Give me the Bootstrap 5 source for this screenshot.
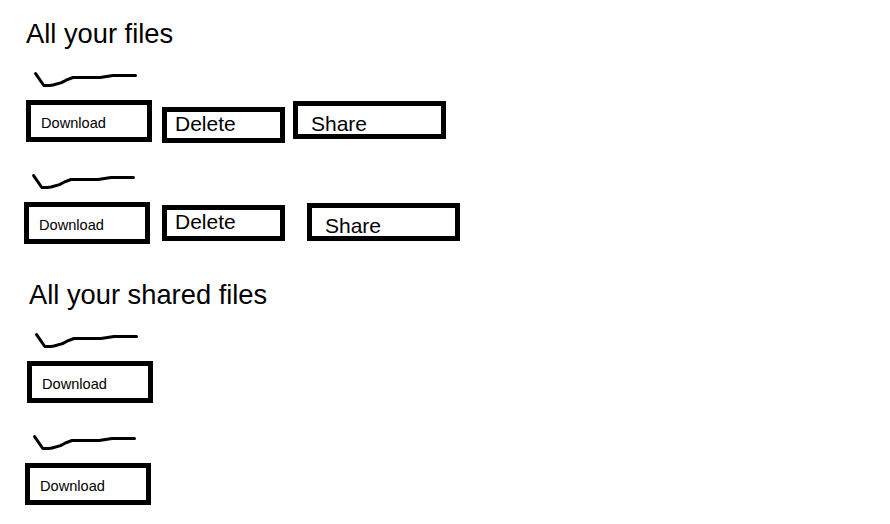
<!DOCTYPE html>
<html lang="en">
<head>
<meta charset="utf-8">
<meta name="viewport" content="width=device-width, initial-scale=1">
<title>Files</title>
<link href="https://cdn.jsdelivr.net/npm/bootstrap@5.3.0/dist/css/bootstrap.min.css" rel="stylesheet">
<style>
  body { font-family: "Liberation Sans", Arial, sans-serif; color: #000; background: #fff; }
  .page { padding: 16px 0 0 24px; }
  .section-title { font-size: 27.3px; line-height: 36px; font-weight: 400; margin: 0 0 14px; }
  .shared { margin-top: 33px; }
  .file + .file { margin-top: 26px; }
  .file-name { display: block; width: 126px; height: 34px; }
  .actions { height: 42px; }
  .box-btn { border: 5px solid #000; border-radius: 0; background: #fff; color: #000; text-align: left; line-height: 24px; white-space: nowrap; padding: 0; }
  .box-download { width: 126px; height: 42px; font-size: 14.6px; padding: 6px 0 0 10px; }
  .box-delete { width: 123px; height: 36px; font-size: 21px; padding-left: 8px; }
  .box-share { width: 153px; height: 38px; font-size: 21px; padding: 6px 0 0 13px; }
  .inset-1 { margin-left: 1px; }
  .inset-2 { margin-left: 2px; }
  .inset-3 { margin-left: 3px; }
  .inset-5 { margin-left: 5px; }
  .first .box-delete { margin: 7px 8px 0 10px; }
  .first .box-share { margin-top: 1px; }
  .second .box-delete { margin: 3px 22px 0 12px; }
  .second .box-share { margin-top: 1px; }
</style>
<script src="https://cdn.jsdelivr.net/npm/bootstrap@5.3.0/dist/js/bootstrap.bundle.min.js"></script>
</head>
<body>
<svg class="d-none" aria-hidden="true">
  <symbol id="scribble" viewBox="0 0 126 34">
    <path d="M9.6 7.6 L17.8 19.5 H23.5 L27 19 L35.5 16.6 L40 14.2 L47 11.5 H74 L87 9.5 H109.5" fill="none" stroke="#000" stroke-width="3" stroke-linecap="round" stroke-linejoin="round"/>
  </symbol>
</svg>
<main class="page">
  <section>
    <h1 class="section-title inset-2">All your files</h1>
    <div class="file first inset-2">
      <svg class="file-name" role="img" aria-label="File"><use href="#scribble"/></svg>
      <div class="actions d-flex align-items-start">
        <button type="button" class="btn box-btn box-download d-flex align-items-start">Download</button>
        <button type="button" class="btn box-btn box-delete d-flex align-items-start">Delete</button>
        <button type="button" class="btn box-btn box-share d-flex align-items-start">Share</button>
      </div>
    </div>
    <div class="file second">
      <svg class="file-name" role="img" aria-label="File"><use href="#scribble"/></svg>
      <div class="actions d-flex align-items-start">
        <button type="button" class="btn box-btn box-download d-flex align-items-start">Download</button>
        <button type="button" class="btn box-btn box-delete d-flex align-items-start">Delete</button>
        <button type="button" class="btn box-btn box-share d-flex align-items-start">Share</button>
      </div>
    </div>
  </section>
  <section class="shared">
    <h2 class="section-title inset-5">All your shared files</h2>
    <div class="file inset-3">
      <svg class="file-name" role="img" aria-label="File"><use href="#scribble"/></svg>
      <div class="actions d-flex align-items-start">
        <button type="button" class="btn box-btn box-download d-flex align-items-start">Download</button>
      </div>
    </div>
    <div class="file inset-1">
      <svg class="file-name" role="img" aria-label="File"><use href="#scribble"/></svg>
      <div class="actions d-flex align-items-start">
        <button type="button" class="btn box-btn box-download d-flex align-items-start">Download</button>
      </div>
    </div>
  </section>
</main>
</body>
</html>
